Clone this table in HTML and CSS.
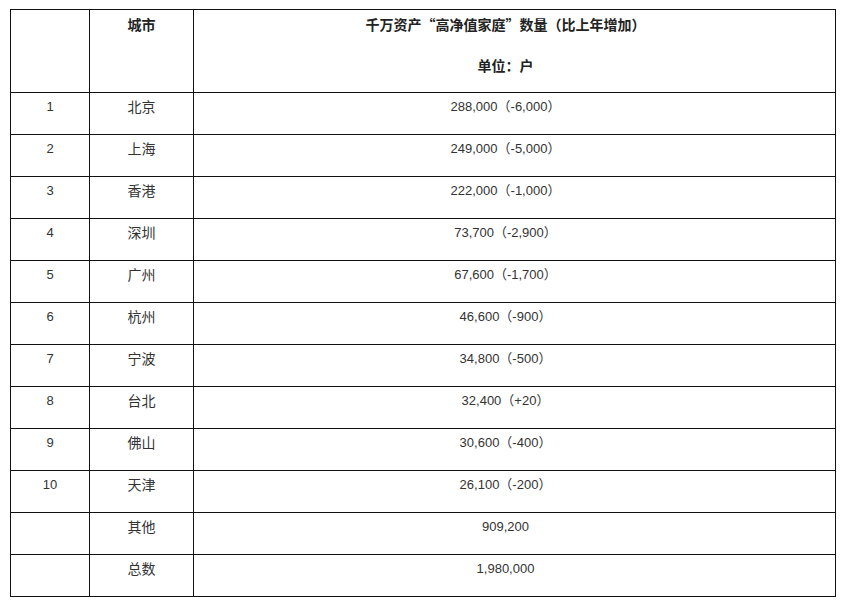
FILE: index.html
```html
<!DOCTYPE html>
<html lang="zh">
<head>
<meta charset="utf-8">
<link rel="stylesheet" href="styles.css">
</head>
<body>
<table class="grid">
  <colgroup>
    <col class="c-rank">
    <col class="c-city">
    <col class="c-num">
  </colgroup>
  <tr class="head">
    <td></td>
    <td><p class="line">城市</p></td>
    <td class="num"><p class="line">千万资产“高净值家庭”数量（比上年增加）</p><p class="line second">单位：户</p></td>
  </tr>
  <tr><td>1</td><td class="city">北京</td><td class="num">288,000（-6,000）</td></tr>
  <tr><td>2</td><td class="city">上海</td><td class="num">249,000（-5,000）</td></tr>
  <tr><td>3</td><td class="city">香港</td><td class="num">222,000（-1,000）</td></tr>
  <tr><td>4</td><td class="city">深圳</td><td class="num">73,700（-2,900）</td></tr>
  <tr><td>5</td><td class="city">广州</td><td class="num">67,600（-1,700）</td></tr>
  <tr><td>6</td><td class="city">杭州</td><td class="num">46,600（-900）</td></tr>
  <tr><td>7</td><td class="city">宁波</td><td class="num">34,800（-500）</td></tr>
  <tr><td>8</td><td class="city">台北</td><td class="num">32,400（+20）</td></tr>
  <tr><td>9</td><td class="city">佛山</td><td class="num">30,600（-400）</td></tr>
  <tr><td>10</td><td class="city">天津</td><td class="num">26,100（-200）</td></tr>
  <tr><td></td><td class="city">其他</td><td class="num">909,200</td></tr>
  <tr><td></td><td class="city">总数</td><td class="num">1,980,000</td></tr>
</table>
</body>
</html>
```

FILE: styles.css
```css
html, body {
  background: #ffffff;
}
body {
  margin: 9px 0 0 10px;
  font-family: "Liberation Sans", "Noto Sans CJK SC", sans-serif;
  font-size: 13px;
  color: #333333;
}
.grid {
  border-collapse: collapse;
  table-layout: fixed;
  width: 825px;
}
.c-rank { width: 79px; }
.c-city { width: 104px; }
.c-num { width: 642px; }
.grid td {
  border: 1px solid #111;
  text-align: center;
  vertical-align: top;
  padding: 4px 0 0 0;
  height: 39px;
  line-height: 20px;
  box-sizing: border-box;
}
.grid td.num {
  padding-right: 18px;
}
.grid tr {
  height: 42px;
}
.grid .city {
  font-size: 14px;
}
.head td {
  height: 83px;
  padding-top: 4px;
  font-weight: bold;
  font-size: 14px;
  color: #222;
  font-family: "Noto Sans CJK SC", "Liberation Sans", sans-serif;
}
.head {
  height: 83px;
}
.line {
  margin: 0;
  line-height: 20px;
}
.second {
  margin-top: 21px;
}
```
